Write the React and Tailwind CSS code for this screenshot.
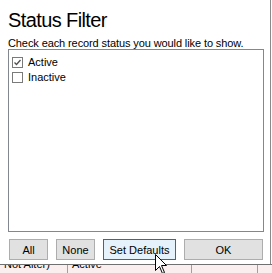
function CheckRow({ checked, label }) {
  return (
    <div className="h-[15px] flex items-center">
      <div className="w-[11px] h-[11px] border border-[#7a7a7a] bg-white relative shrink-0">
        {checked && (
          <svg width="9" height="9" viewBox="0 0 9 9" className="absolute left-0 top-0">
            <path d="M1.5 4.5 L3.5 6.5 L7.5 2" fill="none" stroke="#505050" strokeWidth="1.3" />
          </svg>
        )}
      </div>
      <span className="ml-[5px] text-[11px] leading-[15px]">{label}</span>
    </div>
  );
}

function Btn({ w, label, primary }) {
  return (
    <div
      className={
        primary
          ? "h-[21px] w-[73px] border border-[#0078d7] bg-[#e5f1fb] flex items-center justify-center text-[11px] leading-[12px]"
          : w === 79
          ? "h-[21px] w-[79px] border border-[#adadad] bg-[#e1e1e1] flex items-center justify-center text-[11px] leading-[12px]"
          : "h-[21px] w-[39px] border border-[#adadad] bg-[#e1e1e1] flex items-center justify-center text-[11px] leading-[12px]"
      }
    >
      {label}
    </div>
  );
}

export default function App() {
  return (
    <div className="w-[272px] h-[273px] bg-white overflow-hidden relative font-['Liberation_Sans',Arial,sans-serif] text-black">
      <div className="w-[271px] h-[264px] border-r border-[#8a8a8a] bg-white pl-[8px] pt-[10px] flex flex-col">
        <div className="text-[20px] leading-[20px] tracking-[-0.6px]">Status Filter</div>
        <div className="mt-[7px] text-[11px] leading-[12px] tracking-[-0.1px]">
          Check each record status you would like to show.
        </div>
        <div className="w-[256px] h-[183px] border border-[#828790] pt-[5px] pl-[3px] flex flex-col">
          <CheckRow checked label="Active" />
          <CheckRow label="Inactive" />
        </div>
        <div className="mt-[7px] ml-[1px] flex gap-[8px]">
          <Btn w={39} label="All" />
          <Btn w={39} label="None" />
          <Btn primary label="Set Defaults" />
          <Btn w={79} label="OK" />
        </div>
      </div>
      <div className="h-[9px] border-t border-[#707070] bg-[#fbeeee] flex overflow-hidden">
        <div className="w-[68px] h-full border-r border-[#a0a0a0] pl-[4px] overflow-hidden">
          <div className="-mt-[7px] text-[11px] leading-[12px] whitespace-nowrap">Not Alter)</div>
        </div>
        <div className="w-[124px] h-full border-r border-[#a0a0a0] pl-[4px] overflow-hidden">
          <div className="-mt-[7px] text-[11px] leading-[12px] whitespace-nowrap">Active</div>
        </div>
        <div className="w-[66px] h-full border-r border-[#a0a0a0]" />
        <div className="flex-1 h-full" />
      </div>
      <svg
        width="13"
        height="21"
        viewBox="0 0 13 21"
        className="absolute left-[155px] top-[254px]"
      >
        <polygon
          points="0.5,0.5 0.5,16.5 4.5,12.5 7.5,19.5 9.5,18.5 6.5,11.5 11.5,11.5"
          fill="white"
          stroke="black"
          strokeWidth="1"
          strokeLinejoin="miter"
        />
      </svg>
    </div>
  );
}
